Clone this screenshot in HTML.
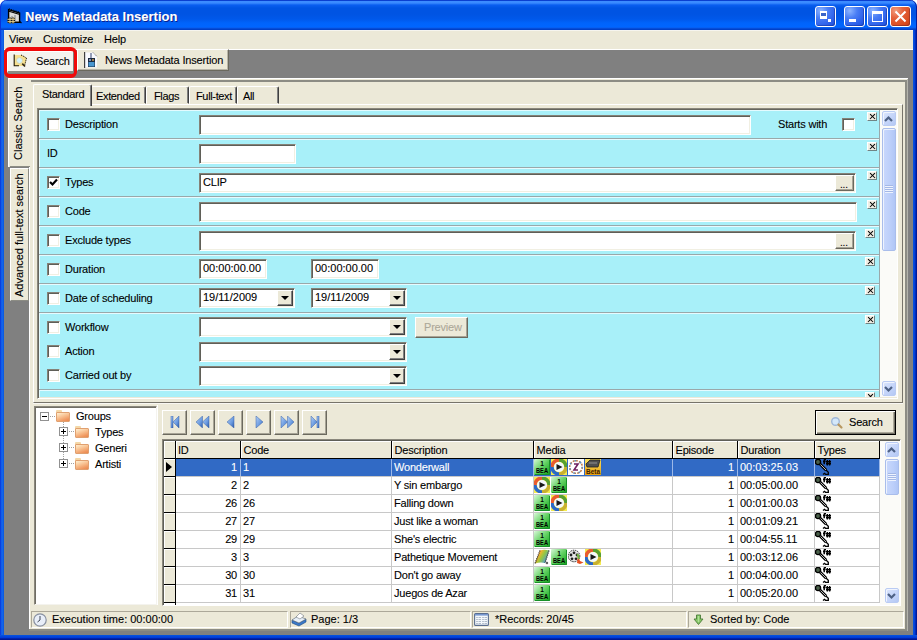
<!DOCTYPE html>
<html><head><meta charset="utf-8"><style>
*{box-sizing:border-box;margin:0;padding:0}
html,body{width:917px;height:640px;overflow:hidden;background:#fff}
body{font-family:"Liberation Sans",sans-serif;font-size:11px;color:#000;position:relative}
.a{position:absolute}
.t{position:absolute;white-space:nowrap;line-height:13px;-webkit-text-stroke:0.1px currentColor;letter-spacing:-0.2px}
.n{letter-spacing:0}
#title{left:0;top:0;width:917px;height:30px;border-radius:7px 7px 0 0;box-shadow:inset 1px 0 #0831d9,inset -1px 0 #001ea0;
 background:linear-gradient(180deg,#0a3fd0 0,#0a3fd0 1px,#3d8cff 1px,#3a8aff 3px,#0a5ef0 5px,#0054e3 8px,#0054e3 14px,#0058ea 19px,#0064fb 23px,#0066ff 27px,#0a5ae8 28px,#0040c8 29px,#0040c8 30px)}
#frameL{left:0;top:30px;width:4px;height:610px;background:linear-gradient(90deg,#0831d9,#166aee 50%,#0855dd)}
#frameR{left:913px;top:30px;width:4px;height:610px;background:linear-gradient(90deg,#0855dd,#003bda 50%,#001ea0 75%,#00138c)}
#frameB{left:0;top:635px;width:917px;height:5px;background:linear-gradient(180deg,#0855dd,#003bda 50%,#001ea0 75%,#00138c)}
#client{left:4px;top:30px;width:909px;height:605px;background:#808080}
.beige{background:#ece9d8}
.cy{background:#a8f0f9}
.inp{position:absolute;background:#fff;border:1px solid;border-color:#858278 #fff #fff #858278;box-shadow:inset 1px 1px #5f5f58,inset -1px -1px #f1efe2}
.chk{position:absolute;width:13px;height:13px;background:#fff;border:1px solid;border-color:#858278 #fff #fff #858278;box-shadow:inset 1px 1px #5f5f58,inset -1px -1px #f1efe2}
.sep{position:absolute;left:39px;width:841px;height:2px;border-top:1px solid #9aa8aa;border-bottom:1px solid #e6fbff}
.xb{position:absolute;width:10px;height:9px;background:#f0eee4;border:1px solid;border-color:#fff #6f8484 #6f8484 #fff}
.xb:before,.xb:after{content:"";position:absolute;left:0.5px;top:3px;width:7px;height:1.2px;background:#000;transform:rotate(45deg)}
.xb:after{transform:rotate(-45deg)}
.btn{position:absolute;background:#ece9d8;border:1px solid;border-color:#fff #6b695e #6b695e #fff;box-shadow:inset -1px -1px #a7a496}
.dd{position:absolute;width:16px;height:16px;background:#ece9d8;border:1px solid;border-color:#fff #404040 #404040 #fff;box-shadow:inset -1px -1px #808080}
.dd:after{content:"";position:absolute;left:3px;top:5px;border-left:4px solid transparent;border-right:4px solid transparent;border-top:4px solid #000}
.tab{position:absolute;background:#ece9d8;border:1px solid;border-color:#fff #404040 transparent #fff;box-shadow:inset -1px 0 #808080;border-radius:2px 2px 0 0}
</style></head><body>
<div id="title" class="a"></div>
<div id="frameL" class="a"></div><div id="frameR" class="a"></div><div id="frameB" class="a"></div>
<div id="client" class="a"></div>
<div class="t n" style="left:25px;top:10px;font-size:13px;font-weight:bold;color:#fff;text-shadow:1px 1px #0a1e8c">News Metadata Insertion</div>
<div class="a beige" style="left:4px;top:30px;width:909px;height:19px;border-top:1px solid #f6f5ef"></div>
<div class="a" style="left:4px;top:49px;width:909px;height:1px;background:#fff"></div>
<div class="t" style="left:9px;top:33px">View</div>
<div class="t" style="left:43px;top:33px">Customize</div>
<div class="t" style="left:104px;top:33px">Help</div>
<div class="a" style="left:77px;top:49px;width:152px;height:22px;background:#ece9d8;border:1px solid;border-color:#fff #6b695e #6b695e #fff;box-shadow:inset -1px -1px #b8b5a8"></div>
<div class="t" style="left:105px;top:54px;letter-spacing:-0.15px">News Metadata Insertion</div>
<div class="a" style="left:7px;top:51px;width:66px;height:22px;background:#f4f3ee;border-top:1px solid #fff;border-left:1px solid #fff;border-bottom:2px solid #8c8c84"></div>
<div class="t" style="left:36px;top:55px">Search</div>
<div class="a" style="left:4px;top:47px;width:73px;height:31px;border:4px solid #f00a0a;border-left-width:3.5px;border-right-width:3.5px;border-radius:6px"></div>
<div class="a beige" style="left:29px;top:78px;width:878px;height:553px"></div>
<div class="a" style="left:8px;top:78px;width:900px;height:1px;background:#fff"></div>
<div class="a" style="left:29px;top:167px;width:1px;height:463px;background:#fff"></div>
<div class="a" style="left:31px;top:80px;width:876px;height:2px;background:#8c8c84"></div>
<div class="a" style="left:905px;top:80px;width:2px;height:551px;background:#8c8c84"></div>
<div class="a" style="left:907px;top:79px;width:1px;height:552px;background:#b4b4ac"></div>
<div class="a" style="left:29px;top:629px;width:878px;height:2px;background:#8c8c84"></div>
<div class="a beige" style="left:8px;top:78px;width:23px;height:89px;border-left:1px solid #fff;border-top:1px solid #fff"></div>
<div class="a" style="left:10px;top:166px;width:20px;height:1px;background:#8c8c84"></div>
<div class="t n" style="left:12px;top:160px;transform-origin:0 0;transform:rotate(-90deg)">Classic Search</div>
<div class="a beige" style="left:10px;top:168px;width:19px;height:133px;border:1px solid;border-color:#fff #8c8c84 #8c8c84 #fff;box-shadow:inset 0 0 0 0 #000"></div>
<div class="t n" style="left:13px;top:297px;transform-origin:0 0;transform:rotate(-90deg)">Advanced full-text search</div>
<div class="a beige" style="left:33px;top:104px;width:870px;height:299px;border:1px solid;border-color:#fff #77746a #77746a #fff"></div>
<div class="a" style="left:33px;top:403px;width:870px;height:1px;background:#f8f7f2"></div>
<div class="tab" style="left:91px;top:86px;width:55px;height:18px"></div>
<div class="t" style="left:96px;top:90px;letter-spacing:-0.35px">Extended</div>
<div class="tab" style="left:146px;top:86px;width:43px;height:18px"></div>
<div class="t" style="left:154px;top:90px;letter-spacing:-0.35px">Flags</div>
<div class="tab" style="left:189px;top:86px;width:48px;height:18px"></div>
<div class="t" style="left:196px;top:90px;letter-spacing:-0.35px">Full-text</div>
<div class="tab" style="left:237px;top:86px;width:42px;height:18px"></div>
<div class="t" style="left:243px;top:90px;letter-spacing:-0.35px">All</div>
<div class="tab" style="left:33px;top:84px;width:59px;height:22px;border-bottom:0"></div>
<div class="t" style="left:42px;top:88px;letter-spacing:-0.3px">Standard</div>
<div class="a" style="left:37px;top:108px;width:861px;height:291px;border:1px solid;border-color:#8a877c #fff #fff #8a877c;box-shadow:inset 1px 1px #66665e"></div>
<div class="a cy" style="left:39px;top:110px;width:841px;height:287px;border-top:1px solid #e4fbff;border-left:1px solid #e4fbff"></div>
<div class="a" style="left:880px;top:110px;width:17px;height:287px;background:#f8f8f3;border-left:1px solid #c8c8c0"></div>
<div class="sep" style="top:138px"></div>
<div class="sep" style="top:167px"></div>
<div class="sep" style="top:196px"></div>
<div class="sep" style="top:225px"></div>
<div class="sep" style="top:254px"></div>
<div class="sep" style="top:283px"></div>
<div class="sep" style="top:312px"></div>
<div class="sep" style="top:389px"></div>
<div class="chk" style="left:47px;top:118px"></div>
<div class="t" style="left:65px;top:118px">Description</div>
<div class="t" style="left:47px;top:147px">ID</div>
<div class="chk" style="left:47px;top:176px"></div>
<div class="t" style="left:65px;top:176px">Types</div>
<div class="chk" style="left:47px;top:205px"></div>
<div class="t" style="left:65px;top:205px">Code</div>
<div class="chk" style="left:47px;top:234px"></div>
<div class="t" style="left:65px;top:234px">Exclude types</div>
<div class="chk" style="left:47px;top:263px"></div>
<div class="t" style="left:65px;top:263px">Duration</div>
<div class="chk" style="left:47px;top:292px"></div>
<div class="t" style="left:65px;top:292px">Date of scheduling</div>
<div class="chk" style="left:47px;top:321px"></div>
<div class="t" style="left:65px;top:321px">Workflow</div>
<div class="chk" style="left:47px;top:345px"></div>
<div class="t" style="left:65px;top:345px">Action</div>
<div class="chk" style="left:47px;top:369px"></div>
<div class="t" style="left:65px;top:369px">Carried out by</div>
<div class="xb" style="left:867px;top:112px"></div>
<div class="xb" style="left:867px;top:142px"></div>
<div class="xb" style="left:867px;top:171px"></div>
<div class="xb" style="left:867px;top:200px"></div>
<div class="xb" style="left:865px;top:229px"></div>
<div class="xb" style="left:865px;top:257px"></div>
<div class="xb" style="left:865px;top:286px"></div>
<div class="xb" style="left:865px;top:315px"></div>
<div class="a" style="left:865px;top:392px;width:10px;height:5px;overflow:hidden"><div class="xb" style="left:0;top:0"></div></div>
<div class="inp" style="left:199px;top:115px;width:552px;height:20px"></div>
<div class="t" style="left:778px;top:117.5px">Starts with</div>
<div class="chk" style="left:842px;top:118px"></div>
<div class="inp" style="left:199px;top:144px;width:97px;height:20px"></div>
<div class="inp" style="left:199px;top:173px;width:657px;height:20px"></div>
<div class="t" style="left:203px;top:176px">CLIP</div>
<div class="btn" style="left:835px;top:175px;width:19px;height:16px"></div><div class="t" style="left:840px;top:178px;font-size:10px">...</div>
<div class="inp" style="left:199px;top:202px;width:658px;height:20px"></div>
<div class="inp" style="left:199px;top:231px;width:657px;height:20px"></div>
<div class="btn" style="left:835px;top:233px;width:19px;height:16px"></div><div class="t" style="left:840px;top:236px;font-size:10px">...</div>
<div class="inp" style="left:199px;top:259px;width:68px;height:20px"></div><div class="t n" style="left:203px;top:262px">00:00:00.00</div>
<div class="inp" style="left:311px;top:259px;width:68px;height:20px"></div><div class="t n" style="left:315px;top:262px">00:00:00.00</div>
<div class="inp" style="left:199px;top:288px;width:96px;height:20px"></div><div class="t n" style="left:203px;top:291px">19/11/2009</div><div class="dd" style="left:277px;top:290px"></div>
<div class="inp" style="left:311px;top:288px;width:96px;height:20px"></div><div class="t n" style="left:315px;top:291px">19/11/2009</div><div class="dd" style="left:389px;top:290px"></div>
<div class="inp" style="left:199px;top:317px;width:208px;height:20px"></div><div class="dd" style="left:389px;top:319px"></div>
<div class="inp" style="left:199px;top:342px;width:208px;height:20px"></div><div class="dd" style="left:389px;top:344px"></div>
<div class="inp" style="left:199px;top:366px;width:208px;height:20px"></div><div class="dd" style="left:389px;top:368px"></div>
<div class="btn" style="left:415px;top:317px;width:53px;height:21px"></div><div class="t" style="left:424px;top:321px;color:#aca899">Preview</div>
<div class="a beige" style="left:33px;top:404px;width:870px;height:203px"></div>
<div class="a" style="left:34px;top:406px;width:123px;height:199px;background:#fff;border:1px solid;border-color:#8a877c #f4f3ee #f4f3ee #8a877c;box-shadow:inset 1px 1px #6f6d64"></div>
<div class="a" style="left:157px;top:405px;width:1px;height:200px;background:#fff"></div>
<div class="a" style="left:40px;top:412px;width:9px;height:9px;border:1px solid #919191;background:#fff"></div><div class="a" style="left:42px;top:416px;width:5px;height:1px;background:#000"></div>
<div class="a" style="left:50px;top:416px;width:5px;border-top:1px dotted #a0a0a0"></div>
<div class="a" style="left:56px;top:410px;width:6px;height:3px;background:#f4d8a8;border-radius:1px 1px 0 0"></div><div class="a" style="left:56px;top:412px;width:14px;height:10px;background:linear-gradient(160deg,#fff0d0,#f8c090 45%,#f09860 80%,#e88850);border:1px solid #e0a070;border-radius:1px"></div>
<div class="t" style="left:76px;top:410px">Groups</div>
<div class="a" style="left:63px;top:422px;height:43px;border-left:1px dotted #a0a0a0"></div>
<div class="a" style="left:59px;top:427px;width:9px;height:9px;border:1px solid #919191;background:#fff"></div><div class="a" style="left:61px;top:431px;width:5px;height:1px;background:#000"></div><div class="a" style="left:63px;top:429px;width:1px;height:5px;background:#000"></div>
<div class="a" style="left:69px;top:431px;width:5px;border-top:1px dotted #a0a0a0"></div>
<div class="a" style="left:75px;top:426px;width:6px;height:3px;background:#f4d8a8;border-radius:1px 1px 0 0"></div><div class="a" style="left:75px;top:428px;width:14px;height:10px;background:linear-gradient(160deg,#fff0d0,#f8c090 45%,#f09860 80%,#e88850);border:1px solid #e0a070;border-radius:1px"></div>
<div class="t" style="left:95px;top:426px">Types</div>
<div class="a" style="left:59px;top:443px;width:9px;height:9px;border:1px solid #919191;background:#fff"></div><div class="a" style="left:61px;top:447px;width:5px;height:1px;background:#000"></div><div class="a" style="left:63px;top:445px;width:1px;height:5px;background:#000"></div>
<div class="a" style="left:69px;top:447px;width:5px;border-top:1px dotted #a0a0a0"></div>
<div class="a" style="left:75px;top:442px;width:6px;height:3px;background:#f4d8a8;border-radius:1px 1px 0 0"></div><div class="a" style="left:75px;top:444px;width:14px;height:10px;background:linear-gradient(160deg,#fff0d0,#f8c090 45%,#f09860 80%,#e88850);border:1px solid #e0a070;border-radius:1px"></div>
<div class="t" style="left:95px;top:442px">Generi</div>
<div class="a" style="left:59px;top:459px;width:9px;height:9px;border:1px solid #919191;background:#fff"></div><div class="a" style="left:61px;top:463px;width:5px;height:1px;background:#000"></div><div class="a" style="left:63px;top:461px;width:1px;height:5px;background:#000"></div>
<div class="a" style="left:69px;top:463px;width:5px;border-top:1px dotted #a0a0a0"></div>
<div class="a" style="left:75px;top:458px;width:6px;height:3px;background:#f4d8a8;border-radius:1px 1px 0 0"></div><div class="a" style="left:75px;top:460px;width:14px;height:10px;background:linear-gradient(160deg,#fff0d0,#f8c090 45%,#f09860 80%,#e88850);border:1px solid #e0a070;border-radius:1px"></div>
<div class="t" style="left:95px;top:458px">Artisti</div>
<div class="btn" style="left:162px;top:410px;width:25px;height:25px"></div>
<div class="btn" style="left:190px;top:410px;width:25px;height:25px"></div>
<div class="btn" style="left:218px;top:410px;width:25px;height:25px"></div>
<div class="btn" style="left:246px;top:410px;width:25px;height:25px"></div>
<div class="btn" style="left:274px;top:410px;width:25px;height:25px"></div>
<div class="btn" style="left:302px;top:410px;width:25px;height:25px"></div>
<svg class="a" style="left:170px;top:416px" width="15" height="12" viewBox="0 0 15 12"><defs><linearGradient id="g0" x1="0" y1="0" x2="1" y2="1"><stop offset="0" stop-color="#b4d0f4"/><stop offset="0.6" stop-color="#6a9ae0"/><stop offset="1" stop-color="#2a58a8"/></linearGradient></defs><g fill="url(#g0)" stroke="#3a62a8" stroke-width="0.5"><rect x="1" y="0" width="2" height="12"/><path d="M9 0 L3 6 L9 12 Z"/></g></svg>
<svg class="a" style="left:195px;top:416px" width="15" height="12" viewBox="0 0 15 12"><defs><linearGradient id="g1" x1="0" y1="0" x2="1" y2="1"><stop offset="0" stop-color="#b4d0f4"/><stop offset="0.6" stop-color="#6a9ae0"/><stop offset="1" stop-color="#2a58a8"/></linearGradient></defs><g fill="url(#g1)" stroke="#3a62a8" stroke-width="0.5"><path d="M7.5 0 L1 6 L7.5 12 Z"/><path d="M14 0 L7.5 6 L14 12 Z"/></g></svg>
<svg class="a" style="left:226px;top:416px" width="15" height="12" viewBox="0 0 15 12"><defs><linearGradient id="g2" x1="0" y1="0" x2="1" y2="1"><stop offset="0" stop-color="#b4d0f4"/><stop offset="0.6" stop-color="#6a9ae0"/><stop offset="1" stop-color="#2a58a8"/></linearGradient></defs><g fill="url(#g2)" stroke="#3a62a8" stroke-width="0.5"><path d="M8 0 L1 6 L8 12 Z"/></g></svg>
<svg class="a" style="left:255px;top:416px" width="15" height="12" viewBox="0 0 15 12"><defs><linearGradient id="g3" x1="0" y1="0" x2="1" y2="1"><stop offset="0" stop-color="#b4d0f4"/><stop offset="0.6" stop-color="#6a9ae0"/><stop offset="1" stop-color="#2a58a8"/></linearGradient></defs><g fill="url(#g3)" stroke="#3a62a8" stroke-width="0.5"><path d="M1 0 L8 6 L1 12 Z"/></g></svg>
<svg class="a" style="left:280px;top:416px" width="15" height="12" viewBox="0 0 15 12"><defs><linearGradient id="g4" x1="0" y1="0" x2="1" y2="1"><stop offset="0" stop-color="#b4d0f4"/><stop offset="0.6" stop-color="#6a9ae0"/><stop offset="1" stop-color="#2a58a8"/></linearGradient></defs><g fill="url(#g4)" stroke="#3a62a8" stroke-width="0.5"><path d="M1 0 L7.5 6 L1 12 Z"/><path d="M7.5 0 L14 6 L7.5 12 Z"/></g></svg>
<svg class="a" style="left:310px;top:416px" width="15" height="12" viewBox="0 0 15 12"><defs><linearGradient id="g5" x1="0" y1="0" x2="1" y2="1"><stop offset="0" stop-color="#b4d0f4"/><stop offset="0.6" stop-color="#6a9ae0"/><stop offset="1" stop-color="#2a58a8"/></linearGradient></defs><g fill="url(#g5)" stroke="#3a62a8" stroke-width="0.5"><path d="M1 0 L7 6 L1 12 Z"/><rect x="7" y="0" width="2" height="12"/></g></svg>
<div class="a" style="left:815px;top:410px;width:81px;height:25px;border:1px solid #000;background:#ece9d8;box-shadow:inset 1px 1px #fff,inset -1px -1px #716f64,inset -2px -2px #aca899"></div>
<div class="t" style="left:849px;top:416px">Search</div>
<svg class="a" style="left:829px;top:415px" width="16" height="16" viewBox="0 0 16 16"><circle cx="6.5" cy="6.5" r="3.8" fill="#d4e8fa" stroke="#a0b8d8" stroke-width="1.4"/><path d="M9.5 9.5 L12.5 12.5" stroke="#b89860" stroke-width="2.2" stroke-linecap="round"/></svg>
<div class="a" style="left:162px;top:439px;width:739px;height:167px;border:1px solid;border-color:#8a877c #fff #fff #8a877c;box-shadow:inset 1px 1px #5f5f58;background:#fff"></div>
<div class="a beige" style="left:164px;top:441px;width:716px;height:17px"></div>
<div class="a" style="left:164px;top:458px;width:716px;height:1px;background:#000"></div>
<div class="a" style="left:176px;top:441px;width:64px;height:17px;border-top:1px solid #fff;border-left:1px solid #fff"></div>
<div class="a" style="left:240px;top:441px;width:1px;height:17px;background:#000"></div>
<div class="a" style="left:241px;top:441px;width:150px;height:17px;border-top:1px solid #fff;border-left:1px solid #fff"></div>
<div class="a" style="left:391px;top:441px;width:1px;height:17px;background:#000"></div>
<div class="a" style="left:392px;top:441px;width:141px;height:17px;border-top:1px solid #fff;border-left:1px solid #fff"></div>
<div class="a" style="left:533px;top:441px;width:1px;height:17px;background:#000"></div>
<div class="a" style="left:534px;top:441px;width:138px;height:17px;border-top:1px solid #fff;border-left:1px solid #fff"></div>
<div class="a" style="left:672px;top:441px;width:1px;height:17px;background:#000"></div>
<div class="a" style="left:673px;top:441px;width:64px;height:17px;border-top:1px solid #fff;border-left:1px solid #fff"></div>
<div class="a" style="left:737px;top:441px;width:1px;height:17px;background:#000"></div>
<div class="a" style="left:738px;top:441px;width:76px;height:17px;border-top:1px solid #fff;border-left:1px solid #fff"></div>
<div class="a" style="left:814px;top:441px;width:1px;height:17px;background:#000"></div>
<div class="a" style="left:815px;top:441px;width:64px;height:17px;border-top:1px solid #fff;border-left:1px solid #fff"></div>
<div class="a" style="left:879px;top:441px;width:1px;height:17px;background:#000"></div>
<div class="t" style="left:178px;top:443.5px">ID</div>
<div class="t" style="left:243.5px;top:443.5px">Code</div>
<div class="t" style="left:394.5px;top:443.5px">Description</div>
<div class="t" style="left:536.5px;top:443.5px">Media</div>
<div class="t" style="left:675.5px;top:443.5px">Episode</div>
<div class="t" style="left:740.5px;top:443.5px">Duration</div>
<div class="t" style="left:817.5px;top:443.5px">Types</div>
<div class="a" style="left:164px;top:441px;width:11px;height:17px;border-top:1px solid #fff;border-left:1px solid #fff"></div>
<div class="a" style="left:175px;top:441px;width:1px;height:164px;background:#000"></div>
<div class="a" style="left:176px;top:459px;width:703px;height:17px;background:#316ac5"></div>
<div class="a" style="left:176px;top:476px;width:703px;height:1px;background:#c8c8c8"></div>
<div class="a beige" style="left:164px;top:459px;width:11px;height:17px;border-top:1px solid #fff;border-left:1px solid #fff"></div>
<div class="a" style="left:164px;top:476px;width:11px;height:1px;background:#000"></div>
<div class="t" style="left:176px;top:461px;width:61px;text-align:right;color:#fff">1</div>
<div class="t" style="left:243px;top:461px;color:#fff">1</div>
<div class="t" style="left:394px;top:461px;color:#fff">Wonderwall</div>
<div class="t" style="left:672px;top:461px;width:62px;text-align:right;color:#fff">1</div>
<div class="t n" style="left:740px;top:461px;color:#fff">00:03:25.03</div>
<svg class="a" style="left:534px;top:459px" width="16" height="16" viewBox="0 0 16 16"><defs><linearGradient id="bg534459" x1="0" y1="0" x2="1" y2="1"><stop offset="0" stop-color="#d8f8d8"/><stop offset="0.5" stop-color="#60d060"/><stop offset="1" stop-color="#10a018"/></linearGradient></defs><rect width="16" height="16" rx="1" fill="url(#bg534459)"/><path d="M15.5 1 V15.5 H1" fill="none" stroke="#189028" stroke-width="1"/><text x="8" y="7" text-anchor="middle" font-family="Liberation Sans" font-weight="bold" font-size="6.5" fill="#000">1</text><text x="2" y="14" textLength="12" lengthAdjust="spacingAndGlyphs" font-family="Liberation Sans" font-weight="bold" font-size="7" fill="#000">BEA</text></svg>
<svg class="a" style="left:551px;top:459px" width="16" height="16" viewBox="0 0 16 16"><rect width="16" height="16" fill="#f4ec50"/><path d="M8 1 A7 7 0 0 0 1 8" fill="none" stroke="#e85a30" stroke-width="3.4"/><path d="M8 1 A7 7 0 0 1 15 8" fill="none" stroke="#58a030" stroke-width="3.4"/><path d="M15 8 A7 7 0 0 1 8 15" fill="none" stroke="#c8b030" stroke-width="3.4"/><path d="M8 15 A7 7 0 0 1 1 8" fill="none" stroke="#2a68c8" stroke-width="3.4"/><circle cx="8" cy="8" r="5" fill="#f4f8fc"/><path d="M5.5 5 L11.5 8 L5.5 11Z" fill="#181818"/></svg>
<svg class="a" style="left:568px;top:459px" width="16" height="16" viewBox="0 0 16 16"><rect width="16" height="16" fill="#fff"/><circle cx="8" cy="8" r="6.3" fill="none" stroke="#c08050" stroke-width="1.6" stroke-dasharray="2 1.2"/><circle cx="8" cy="8" r="6.3" fill="none" stroke="#6090c0" stroke-width="1.6" stroke-dasharray="1.5 4" /><path d="M6 5 H10 L6 11 H10" fill="none" stroke="#702060" stroke-width="1.6"/></svg>
<svg class="a" style="left:585px;top:459px" width="16" height="16" viewBox="0 0 16 16"><defs><linearGradient id="bt585459" x1="0" y1="0" x2="0" y2="1"><stop offset="0" stop-color="#f8e060"/><stop offset="1" stop-color="#e8a010"/></linearGradient></defs><rect width="16" height="16" fill="url(#bt585459)"/><path d="M1 5 L5 1 H15 L13 8 H2Z" fill="#505050" stroke="#202020" stroke-width="0.8"/><path d="M4 4 H12" stroke="#909090" stroke-width="1"/><text x="1" y="15" textLength="14" lengthAdjust="spacingAndGlyphs" font-family="Liberation Sans" font-weight="bold" font-size="6.5" fill="#402000">Beta</text></svg>
<svg class="a" style="left:815px;top:459px" width="17" height="17" viewBox="0 0 17 17"><path d="M5 5 L11.2 11.2" stroke="#000" stroke-width="2.8"/><path d="M5.3 5.3 L11 11" stroke="#b8b8b8" stroke-width="1"/><circle cx="3" cy="3" r="2.6" fill="#4a604a" stroke="#000" stroke-width="1.4"/><path d="M11 11 L13.3 13.3 L13.3 15.3 L10.5 15.3 L9.5 14.3 L8 15.5" fill="none" stroke="#000" stroke-width="1.3"/><path d="M9.2 5.2 V1.5 Q9.2 0.5 11 0.6 M8 2.4 H10.6" fill="none" stroke="#000" stroke-width="1.5"/><path d="M12.3 1 V6.5 M14.6 1 V6.5 M11 2.8 H16 M11 4.8 H16" fill="none" stroke="#000" stroke-width="1.4"/></svg>
<div class="a" style="left:176px;top:494px;width:703px;height:1px;background:#c8c8c8"></div>
<div class="a beige" style="left:164px;top:477px;width:11px;height:17px;border-top:1px solid #fff;border-left:1px solid #fff"></div>
<div class="a" style="left:164px;top:494px;width:11px;height:1px;background:#000"></div>
<div class="t" style="left:176px;top:479px;width:61px;text-align:right;color:#000">2</div>
<div class="t" style="left:243px;top:479px;color:#000">2</div>
<div class="t" style="left:394px;top:479px;color:#000">Y sin embargo</div>
<div class="t" style="left:672px;top:479px;width:62px;text-align:right;color:#000">1</div>
<div class="t n" style="left:740px;top:479px;color:#000">00:05:00.00</div>
<svg class="a" style="left:534px;top:477px" width="16" height="16" viewBox="0 0 16 16"><rect width="16" height="16" fill="#f4ec50"/><path d="M8 1 A7 7 0 0 0 1 8" fill="none" stroke="#e85a30" stroke-width="3.4"/><path d="M8 1 A7 7 0 0 1 15 8" fill="none" stroke="#58a030" stroke-width="3.4"/><path d="M15 8 A7 7 0 0 1 8 15" fill="none" stroke="#c8b030" stroke-width="3.4"/><path d="M8 15 A7 7 0 0 1 1 8" fill="none" stroke="#2a68c8" stroke-width="3.4"/><circle cx="8" cy="8" r="5" fill="#f4f8fc"/><path d="M5.5 5 L11.5 8 L5.5 11Z" fill="#181818"/></svg>
<svg class="a" style="left:551px;top:477px" width="16" height="16" viewBox="0 0 16 16"><defs><linearGradient id="bg551477" x1="0" y1="0" x2="1" y2="1"><stop offset="0" stop-color="#d8f8d8"/><stop offset="0.5" stop-color="#60d060"/><stop offset="1" stop-color="#10a018"/></linearGradient></defs><rect width="16" height="16" rx="1" fill="url(#bg551477)"/><path d="M15.5 1 V15.5 H1" fill="none" stroke="#189028" stroke-width="1"/><text x="8" y="7" text-anchor="middle" font-family="Liberation Sans" font-weight="bold" font-size="6.5" fill="#000">1</text><text x="2" y="14" textLength="12" lengthAdjust="spacingAndGlyphs" font-family="Liberation Sans" font-weight="bold" font-size="7" fill="#000">BEA</text></svg>
<svg class="a" style="left:815px;top:477px" width="17" height="17" viewBox="0 0 17 17"><path d="M5 5 L11.2 11.2" stroke="#000" stroke-width="2.8"/><path d="M5.3 5.3 L11 11" stroke="#b8b8b8" stroke-width="1"/><circle cx="3" cy="3" r="2.6" fill="#4a604a" stroke="#000" stroke-width="1.4"/><path d="M11 11 L13.3 13.3 L13.3 15.3 L10.5 15.3 L9.5 14.3 L8 15.5" fill="none" stroke="#000" stroke-width="1.3"/><path d="M9.2 5.2 V1.5 Q9.2 0.5 11 0.6 M8 2.4 H10.6" fill="none" stroke="#000" stroke-width="1.5"/><path d="M12.3 1 V6.5 M14.6 1 V6.5 M11 2.8 H16 M11 4.8 H16" fill="none" stroke="#000" stroke-width="1.4"/></svg>
<div class="a" style="left:176px;top:512px;width:703px;height:1px;background:#c8c8c8"></div>
<div class="a beige" style="left:164px;top:495px;width:11px;height:17px;border-top:1px solid #fff;border-left:1px solid #fff"></div>
<div class="a" style="left:164px;top:512px;width:11px;height:1px;background:#000"></div>
<div class="t" style="left:176px;top:497px;width:61px;text-align:right;color:#000">26</div>
<div class="t" style="left:243px;top:497px;color:#000">26</div>
<div class="t" style="left:394px;top:497px;color:#000">Falling down</div>
<div class="t" style="left:672px;top:497px;width:62px;text-align:right;color:#000">1</div>
<div class="t n" style="left:740px;top:497px;color:#000">00:01:00.03</div>
<svg class="a" style="left:534px;top:495px" width="16" height="16" viewBox="0 0 16 16"><defs><linearGradient id="bg534495" x1="0" y1="0" x2="1" y2="1"><stop offset="0" stop-color="#d8f8d8"/><stop offset="0.5" stop-color="#60d060"/><stop offset="1" stop-color="#10a018"/></linearGradient></defs><rect width="16" height="16" rx="1" fill="url(#bg534495)"/><path d="M15.5 1 V15.5 H1" fill="none" stroke="#189028" stroke-width="1"/><text x="8" y="7" text-anchor="middle" font-family="Liberation Sans" font-weight="bold" font-size="6.5" fill="#000">1</text><text x="2" y="14" textLength="12" lengthAdjust="spacingAndGlyphs" font-family="Liberation Sans" font-weight="bold" font-size="7" fill="#000">BEA</text></svg>
<svg class="a" style="left:551px;top:495px" width="16" height="16" viewBox="0 0 16 16"><rect width="16" height="16" fill="#f4ec50"/><path d="M8 1 A7 7 0 0 0 1 8" fill="none" stroke="#e85a30" stroke-width="3.4"/><path d="M8 1 A7 7 0 0 1 15 8" fill="none" stroke="#58a030" stroke-width="3.4"/><path d="M15 8 A7 7 0 0 1 8 15" fill="none" stroke="#c8b030" stroke-width="3.4"/><path d="M8 15 A7 7 0 0 1 1 8" fill="none" stroke="#2a68c8" stroke-width="3.4"/><circle cx="8" cy="8" r="5" fill="#f4f8fc"/><path d="M5.5 5 L11.5 8 L5.5 11Z" fill="#181818"/></svg>
<svg class="a" style="left:815px;top:495px" width="17" height="17" viewBox="0 0 17 17"><path d="M5 5 L11.2 11.2" stroke="#000" stroke-width="2.8"/><path d="M5.3 5.3 L11 11" stroke="#b8b8b8" stroke-width="1"/><circle cx="3" cy="3" r="2.6" fill="#4a604a" stroke="#000" stroke-width="1.4"/><path d="M11 11 L13.3 13.3 L13.3 15.3 L10.5 15.3 L9.5 14.3 L8 15.5" fill="none" stroke="#000" stroke-width="1.3"/><path d="M9.2 5.2 V1.5 Q9.2 0.5 11 0.6 M8 2.4 H10.6" fill="none" stroke="#000" stroke-width="1.5"/><path d="M12.3 1 V6.5 M14.6 1 V6.5 M11 2.8 H16 M11 4.8 H16" fill="none" stroke="#000" stroke-width="1.4"/></svg>
<div class="a" style="left:176px;top:530px;width:703px;height:1px;background:#c8c8c8"></div>
<div class="a beige" style="left:164px;top:513px;width:11px;height:17px;border-top:1px solid #fff;border-left:1px solid #fff"></div>
<div class="a" style="left:164px;top:530px;width:11px;height:1px;background:#000"></div>
<div class="t" style="left:176px;top:515px;width:61px;text-align:right;color:#000">27</div>
<div class="t" style="left:243px;top:515px;color:#000">27</div>
<div class="t" style="left:394px;top:515px;color:#000">Just like a woman</div>
<div class="t" style="left:672px;top:515px;width:62px;text-align:right;color:#000">1</div>
<div class="t n" style="left:740px;top:515px;color:#000">00:01:09.21</div>
<svg class="a" style="left:534px;top:513px" width="16" height="16" viewBox="0 0 16 16"><defs><linearGradient id="bg534513" x1="0" y1="0" x2="1" y2="1"><stop offset="0" stop-color="#d8f8d8"/><stop offset="0.5" stop-color="#60d060"/><stop offset="1" stop-color="#10a018"/></linearGradient></defs><rect width="16" height="16" rx="1" fill="url(#bg534513)"/><path d="M15.5 1 V15.5 H1" fill="none" stroke="#189028" stroke-width="1"/><text x="8" y="7" text-anchor="middle" font-family="Liberation Sans" font-weight="bold" font-size="6.5" fill="#000">1</text><text x="2" y="14" textLength="12" lengthAdjust="spacingAndGlyphs" font-family="Liberation Sans" font-weight="bold" font-size="7" fill="#000">BEA</text></svg>
<svg class="a" style="left:815px;top:513px" width="17" height="17" viewBox="0 0 17 17"><path d="M5 5 L11.2 11.2" stroke="#000" stroke-width="2.8"/><path d="M5.3 5.3 L11 11" stroke="#b8b8b8" stroke-width="1"/><circle cx="3" cy="3" r="2.6" fill="#4a604a" stroke="#000" stroke-width="1.4"/><path d="M11 11 L13.3 13.3 L13.3 15.3 L10.5 15.3 L9.5 14.3 L8 15.5" fill="none" stroke="#000" stroke-width="1.3"/><path d="M9.2 5.2 V1.5 Q9.2 0.5 11 0.6 M8 2.4 H10.6" fill="none" stroke="#000" stroke-width="1.5"/><path d="M12.3 1 V6.5 M14.6 1 V6.5 M11 2.8 H16 M11 4.8 H16" fill="none" stroke="#000" stroke-width="1.4"/></svg>
<div class="a" style="left:176px;top:548px;width:703px;height:1px;background:#c8c8c8"></div>
<div class="a beige" style="left:164px;top:531px;width:11px;height:17px;border-top:1px solid #fff;border-left:1px solid #fff"></div>
<div class="a" style="left:164px;top:548px;width:11px;height:1px;background:#000"></div>
<div class="t" style="left:176px;top:533px;width:61px;text-align:right;color:#000">29</div>
<div class="t" style="left:243px;top:533px;color:#000">29</div>
<div class="t" style="left:394px;top:533px;color:#000">She's electric</div>
<div class="t" style="left:672px;top:533px;width:62px;text-align:right;color:#000">1</div>
<div class="t n" style="left:740px;top:533px;color:#000">00:04:55.11</div>
<svg class="a" style="left:534px;top:531px" width="16" height="16" viewBox="0 0 16 16"><defs><linearGradient id="bg534531" x1="0" y1="0" x2="1" y2="1"><stop offset="0" stop-color="#d8f8d8"/><stop offset="0.5" stop-color="#60d060"/><stop offset="1" stop-color="#10a018"/></linearGradient></defs><rect width="16" height="16" rx="1" fill="url(#bg534531)"/><path d="M15.5 1 V15.5 H1" fill="none" stroke="#189028" stroke-width="1"/><text x="8" y="7" text-anchor="middle" font-family="Liberation Sans" font-weight="bold" font-size="6.5" fill="#000">1</text><text x="2" y="14" textLength="12" lengthAdjust="spacingAndGlyphs" font-family="Liberation Sans" font-weight="bold" font-size="7" fill="#000">BEA</text></svg>
<svg class="a" style="left:815px;top:531px" width="17" height="17" viewBox="0 0 17 17"><path d="M5 5 L11.2 11.2" stroke="#000" stroke-width="2.8"/><path d="M5.3 5.3 L11 11" stroke="#b8b8b8" stroke-width="1"/><circle cx="3" cy="3" r="2.6" fill="#4a604a" stroke="#000" stroke-width="1.4"/><path d="M11 11 L13.3 13.3 L13.3 15.3 L10.5 15.3 L9.5 14.3 L8 15.5" fill="none" stroke="#000" stroke-width="1.3"/><path d="M9.2 5.2 V1.5 Q9.2 0.5 11 0.6 M8 2.4 H10.6" fill="none" stroke="#000" stroke-width="1.5"/><path d="M12.3 1 V6.5 M14.6 1 V6.5 M11 2.8 H16 M11 4.8 H16" fill="none" stroke="#000" stroke-width="1.4"/></svg>
<div class="a" style="left:176px;top:566px;width:703px;height:1px;background:#c8c8c8"></div>
<div class="a beige" style="left:164px;top:549px;width:11px;height:17px;border-top:1px solid #fff;border-left:1px solid #fff"></div>
<div class="a" style="left:164px;top:566px;width:11px;height:1px;background:#000"></div>
<div class="t" style="left:176px;top:551px;width:61px;text-align:right;color:#000">3</div>
<div class="t" style="left:243px;top:551px;color:#000">3</div>
<div class="t" style="left:394px;top:551px;color:#000">Pathetique Movement</div>
<div class="t" style="left:672px;top:551px;width:62px;text-align:right;color:#000">1</div>
<div class="t n" style="left:740px;top:551px;color:#000">00:03:12.06</div>
<svg class="a" style="left:534px;top:549px" width="16" height="16" viewBox="0 0 16 16"><defs><linearGradient id="ms534549" x1="0" y1="0" x2="1" y2="0.6"><stop offset="0" stop-color="#f06020"/><stop offset="0.35" stop-color="#f8b030"/><stop offset="0.6" stop-color="#98c840"/><stop offset="1" stop-color="#4898e0"/></linearGradient></defs><path d="M6 1.5 Q10 0 15 1.5 L11 14 Q6 13 1 14.5Z" fill="url(#ms534549)"/><path d="M6 1.5 L1 14.5 M15 1.5 L11 14" stroke="#202020" stroke-width="1.2" stroke-dasharray="1.2 0.9"/><circle cx="13" cy="14" r="1.2" fill="#606060"/></svg>
<svg class="a" style="left:551px;top:549px" width="16" height="16" viewBox="0 0 16 16"><defs><linearGradient id="bg551549" x1="0" y1="0" x2="1" y2="1"><stop offset="0" stop-color="#d8f8d8"/><stop offset="0.5" stop-color="#60d060"/><stop offset="1" stop-color="#10a018"/></linearGradient></defs><rect width="16" height="16" rx="1" fill="url(#bg551549)"/><path d="M15.5 1 V15.5 H1" fill="none" stroke="#189028" stroke-width="1"/><text x="8" y="7" text-anchor="middle" font-family="Liberation Sans" font-weight="bold" font-size="6.5" fill="#000">1</text><text x="2" y="14" textLength="12" lengthAdjust="spacingAndGlyphs" font-family="Liberation Sans" font-weight="bold" font-size="7" fill="#000">BEA</text></svg>
<svg class="a" style="left:568px;top:549px" width="16" height="16" viewBox="0 0 16 16"><circle cx="6" cy="7" r="5.8" fill="#e8e8e8" stroke="#303030" stroke-width="1" stroke-dasharray="1.5 0.8"/><circle cx="6" cy="3.8" r="1.4" fill="#202020"/><circle cx="3" cy="6" r="1.4" fill="#202020"/><circle cx="9" cy="6" r="1.4" fill="#202020"/><circle cx="4" cy="9.8" r="1.4" fill="#202020"/><circle cx="8" cy="9.8" r="1.4" fill="#202020"/><path d="M10 7 L12 12 L15.5 13.5 L12 15 L9 14Z" fill="#e85020"/><path d="M9.5 5 L11 10" stroke="#70b040" stroke-width="2"/></svg>
<svg class="a" style="left:585px;top:549px" width="16" height="16" viewBox="0 0 16 16"><rect width="16" height="16" fill="#f4ec50"/><path d="M8 1 A7 7 0 0 0 1 8" fill="none" stroke="#e85a30" stroke-width="3.4"/><path d="M8 1 A7 7 0 0 1 15 8" fill="none" stroke="#58a030" stroke-width="3.4"/><path d="M15 8 A7 7 0 0 1 8 15" fill="none" stroke="#c8b030" stroke-width="3.4"/><path d="M8 15 A7 7 0 0 1 1 8" fill="none" stroke="#2a68c8" stroke-width="3.4"/><circle cx="8" cy="8" r="5" fill="#f4f8fc"/><path d="M5.5 5 L11.5 8 L5.5 11Z" fill="#181818"/></svg>
<svg class="a" style="left:815px;top:549px" width="17" height="17" viewBox="0 0 17 17"><path d="M5 5 L11.2 11.2" stroke="#000" stroke-width="2.8"/><path d="M5.3 5.3 L11 11" stroke="#b8b8b8" stroke-width="1"/><circle cx="3" cy="3" r="2.6" fill="#4a604a" stroke="#000" stroke-width="1.4"/><path d="M11 11 L13.3 13.3 L13.3 15.3 L10.5 15.3 L9.5 14.3 L8 15.5" fill="none" stroke="#000" stroke-width="1.3"/><path d="M9.2 5.2 V1.5 Q9.2 0.5 11 0.6 M8 2.4 H10.6" fill="none" stroke="#000" stroke-width="1.5"/><path d="M12.3 1 V6.5 M14.6 1 V6.5 M11 2.8 H16 M11 4.8 H16" fill="none" stroke="#000" stroke-width="1.4"/></svg>
<div class="a" style="left:176px;top:584px;width:703px;height:1px;background:#c8c8c8"></div>
<div class="a beige" style="left:164px;top:567px;width:11px;height:17px;border-top:1px solid #fff;border-left:1px solid #fff"></div>
<div class="a" style="left:164px;top:584px;width:11px;height:1px;background:#000"></div>
<div class="t" style="left:176px;top:569px;width:61px;text-align:right;color:#000">30</div>
<div class="t" style="left:243px;top:569px;color:#000">30</div>
<div class="t" style="left:394px;top:569px;color:#000">Don't go away</div>
<div class="t" style="left:672px;top:569px;width:62px;text-align:right;color:#000">1</div>
<div class="t n" style="left:740px;top:569px;color:#000">00:04:00.00</div>
<svg class="a" style="left:534px;top:567px" width="16" height="16" viewBox="0 0 16 16"><defs><linearGradient id="bg534567" x1="0" y1="0" x2="1" y2="1"><stop offset="0" stop-color="#d8f8d8"/><stop offset="0.5" stop-color="#60d060"/><stop offset="1" stop-color="#10a018"/></linearGradient></defs><rect width="16" height="16" rx="1" fill="url(#bg534567)"/><path d="M15.5 1 V15.5 H1" fill="none" stroke="#189028" stroke-width="1"/><text x="8" y="7" text-anchor="middle" font-family="Liberation Sans" font-weight="bold" font-size="6.5" fill="#000">1</text><text x="2" y="14" textLength="12" lengthAdjust="spacingAndGlyphs" font-family="Liberation Sans" font-weight="bold" font-size="7" fill="#000">BEA</text></svg>
<svg class="a" style="left:815px;top:567px" width="17" height="17" viewBox="0 0 17 17"><path d="M5 5 L11.2 11.2" stroke="#000" stroke-width="2.8"/><path d="M5.3 5.3 L11 11" stroke="#b8b8b8" stroke-width="1"/><circle cx="3" cy="3" r="2.6" fill="#4a604a" stroke="#000" stroke-width="1.4"/><path d="M11 11 L13.3 13.3 L13.3 15.3 L10.5 15.3 L9.5 14.3 L8 15.5" fill="none" stroke="#000" stroke-width="1.3"/><path d="M9.2 5.2 V1.5 Q9.2 0.5 11 0.6 M8 2.4 H10.6" fill="none" stroke="#000" stroke-width="1.5"/><path d="M12.3 1 V6.5 M14.6 1 V6.5 M11 2.8 H16 M11 4.8 H16" fill="none" stroke="#000" stroke-width="1.4"/></svg>
<div class="a" style="left:176px;top:602px;width:703px;height:1px;background:#c8c8c8"></div>
<div class="a beige" style="left:164px;top:585px;width:11px;height:17px;border-top:1px solid #fff;border-left:1px solid #fff"></div>
<div class="a" style="left:164px;top:602px;width:11px;height:1px;background:#000"></div>
<div class="t" style="left:176px;top:587px;width:61px;text-align:right;color:#000">31</div>
<div class="t" style="left:243px;top:587px;color:#000">31</div>
<div class="t" style="left:394px;top:587px;color:#000">Juegos de Azar</div>
<div class="t" style="left:672px;top:587px;width:62px;text-align:right;color:#000">1</div>
<div class="t n" style="left:740px;top:587px;color:#000">00:05:20.00</div>
<svg class="a" style="left:534px;top:585px" width="16" height="16" viewBox="0 0 16 16"><defs><linearGradient id="bg534585" x1="0" y1="0" x2="1" y2="1"><stop offset="0" stop-color="#d8f8d8"/><stop offset="0.5" stop-color="#60d060"/><stop offset="1" stop-color="#10a018"/></linearGradient></defs><rect width="16" height="16" rx="1" fill="url(#bg534585)"/><path d="M15.5 1 V15.5 H1" fill="none" stroke="#189028" stroke-width="1"/><text x="8" y="7" text-anchor="middle" font-family="Liberation Sans" font-weight="bold" font-size="6.5" fill="#000">1</text><text x="2" y="14" textLength="12" lengthAdjust="spacingAndGlyphs" font-family="Liberation Sans" font-weight="bold" font-size="7" fill="#000">BEA</text></svg>
<svg class="a" style="left:815px;top:585px" width="17" height="17" viewBox="0 0 17 17"><path d="M5 5 L11.2 11.2" stroke="#000" stroke-width="2.8"/><path d="M5.3 5.3 L11 11" stroke="#b8b8b8" stroke-width="1"/><circle cx="3" cy="3" r="2.6" fill="#4a604a" stroke="#000" stroke-width="1.4"/><path d="M11 11 L13.3 13.3 L13.3 15.3 L10.5 15.3 L9.5 14.3 L8 15.5" fill="none" stroke="#000" stroke-width="1.3"/><path d="M9.2 5.2 V1.5 Q9.2 0.5 11 0.6 M8 2.4 H10.6" fill="none" stroke="#000" stroke-width="1.5"/><path d="M12.3 1 V6.5 M14.6 1 V6.5 M11 2.8 H16 M11 4.8 H16" fill="none" stroke="#000" stroke-width="1.4"/></svg>
<div class="a" style="left:166px;top:462px;width:0;height:0;border-top:5.5px solid transparent;border-bottom:5.5px solid transparent;border-left:6px solid #000"></div>
<div class="a" style="left:240px;top:459px;width:1px;height:17px;background:#9cb8e8"></div>
<div class="a" style="left:240px;top:476px;width:1px;height:127px;background:#c8c8c8"></div>
<div class="a" style="left:391px;top:459px;width:1px;height:17px;background:#9cb8e8"></div>
<div class="a" style="left:391px;top:476px;width:1px;height:127px;background:#c8c8c8"></div>
<div class="a" style="left:533px;top:459px;width:1px;height:17px;background:#9cb8e8"></div>
<div class="a" style="left:533px;top:476px;width:1px;height:127px;background:#c8c8c8"></div>
<div class="a" style="left:672px;top:459px;width:1px;height:17px;background:#9cb8e8"></div>
<div class="a" style="left:672px;top:476px;width:1px;height:127px;background:#c8c8c8"></div>
<div class="a" style="left:737px;top:459px;width:1px;height:17px;background:#9cb8e8"></div>
<div class="a" style="left:737px;top:476px;width:1px;height:127px;background:#c8c8c8"></div>
<div class="a" style="left:814px;top:459px;width:1px;height:17px;background:#9cb8e8"></div>
<div class="a" style="left:814px;top:476px;width:1px;height:127px;background:#c8c8c8"></div>
<div class="a" style="left:879px;top:459px;width:1px;height:17px;background:#9cb8e8"></div>
<div class="a" style="left:879px;top:476px;width:1px;height:127px;background:#c8c8c8"></div>
<div class="a" style="left:31px;top:611px;width:257px;height:17px;border:1px solid;border-color:#aca899 #fff #fff #aca899"></div>
<div class="a" style="left:290px;top:611px;width:181px;height:17px;border:1px solid;border-color:#aca899 #fff #fff #aca899"></div>
<div class="a" style="left:472px;top:611px;width:215px;height:17px;border:1px solid;border-color:#aca899 #fff #fff #aca899"></div>
<div class="a" style="left:688px;top:611px;width:216px;height:17px;border:1px solid;border-color:#aca899 #fff #fff #aca899"></div>
<div class="t n" style="left:52px;top:613px">Execution time: 00:00:00</div>
<div class="t n" style="left:311px;top:613px">Page: 1/3</div>
<div class="t n" style="left:495px;top:613px">*Records: 20/45</div>
<div class="t n" style="left:710px;top:613px">Sorted by: Code</div>
<svg class="a" style="left:33px;top:613px" width="14" height="14" viewBox="0 0 14 14"><circle cx="7" cy="7" r="6.2" fill="#e8eef8" stroke="#8890a0" stroke-width="1.2"/><path d="M7 3 V7 L4.5 9" stroke="#404858" stroke-width="1" fill="none"/></svg>
<svg class="a" style="left:291px;top:612px" width="16" height="16" viewBox="0 0 16 16"><path d="M1 8 L8 11 L15 7 L15 10 L8 14 L1 11Z" fill="#3a78c8" stroke="#204a80" stroke-width="0.6"/><path d="M1 8 L7 4 L15 7 L8 11Z" fill="#e8f0f8" stroke="#506070" stroke-width="0.6"/><path d="M5 5 L9 1 L13 4 L9 7Z" fill="#fff" stroke="#707880" stroke-width="0.6"/></svg>
<svg class="a" style="left:474px;top:613px" width="15" height="13" viewBox="0 0 15 13"><rect x="0.6" y="0.6" width="13.8" height="11.8" rx="1" fill="#f4f8fc" stroke="#5a6e90" stroke-width="1.1"/><rect x="1" y="1" width="13" height="1.6" fill="#7898d0"/><g fill="#8090a8"><rect x="2.5" y="4" width="1" height="1"/><rect x="2.5" y="6" width="1" height="1"/><rect x="2.5" y="8" width="1" height="1"/><rect x="2.5" y="10" width="1" height="1"/><rect x="8.5" y="4" width="1" height="1"/><rect x="8.5" y="6" width="1" height="1"/><rect x="8.5" y="8" width="1" height="1"/><rect x="8.5" y="10" width="1" height="1"/></g><g fill="#b0bccc"><rect x="4.5" y="4" width="2.5" height="1"/><rect x="4.5" y="6" width="2.5" height="1"/><rect x="4.5" y="8" width="2.5" height="1"/><rect x="4.5" y="10" width="2.5" height="1"/><rect x="10.5" y="4" width="2.5" height="1"/><rect x="10.5" y="6" width="2.5" height="1"/><rect x="10.5" y="8" width="2.5" height="1"/><rect x="10.5" y="10" width="2.5" height="1"/></g></svg>
<svg class="a" style="left:693px;top:614px" width="11" height="12" viewBox="0 0 11 12"><path d="M3.5 1 H7.5 V5 H10 L5.5 10.5 L1 5 H3.5Z" fill="#88c868" stroke="#4a7a38" stroke-width="0.9"/><path d="M5.5 2 V8" stroke="#b0e098" stroke-width="1.2"/></svg>
<div class="a" style="left:815px;top:6px;width:21px;height:21px;border:1px solid #fff;border-radius:3px;background:radial-gradient(circle at 25% 20%,#8cb4ff 0,#4a7ef5 35%,#2a5de8 75%,#1c4fd6 100%);box-shadow:inset -1px -1px rgba(0,0,60,.25)"><div class="a" style="left:4px;top:4px;width:7px;height:8px;border:1px solid #fff;border-top-width:2.5px;border-bottom-width:3px;background:#3a64c8"></div><div class="a" style="left:12px;top:12px;width:3px;height:3px;background:#fff"></div></div>
<div class="a" style="left:844px;top:6px;width:21px;height:21px;border:1px solid #fff;border-radius:3px;background:radial-gradient(circle at 25% 20%,#8cb4ff 0,#4a7ef5 35%,#2a5de8 75%,#1c4fd6 100%);box-shadow:inset -1px -1px rgba(0,0,60,.25)"><div class="a" style="left:4px;top:12px;width:7px;height:3px;background:#fff"></div></div>
<div class="a" style="left:867px;top:6px;width:21px;height:21px;border:1px solid #fff;border-radius:3px;background:radial-gradient(circle at 25% 20%,#8cb4ff 0,#4a7ef5 35%,#2a5de8 75%,#1c4fd6 100%);box-shadow:inset -1px -1px rgba(0,0,60,.25)"><div class="a" style="left:4px;top:4px;width:11px;height:11px;border:1px solid #fff;border-top-width:3px"></div></div>
<div class="a" style="left:890px;top:6px;width:21px;height:21px;border:1px solid #fff;border-radius:3px;background:radial-gradient(circle at 25% 20%,#f29d7e 0,#e5633d 35%,#d8481c 80%,#c8401a 100%);box-shadow:inset -1px -1px rgba(0,0,60,.25)"><svg class="a" style="left:3px;top:3px" width="13" height="13" viewBox="0 0 13 13"><path d="M1.5 1.5 L11.5 11.5 M11.5 1.5 L1.5 11.5" stroke="#fff" stroke-width="2" /></svg></div>
<svg class="a" style="left:6px;top:8px" width="16" height="16" viewBox="0 0 16 16"><path d="M2.6 1.6 L13.6 5 L13.6 14.2 L2.6 14.2Z" fill="#dcdcdc" stroke="#000" stroke-width="1.4"/><path d="M3 3.2 L13 6.3" stroke="#000" stroke-width="1.2"/><path d="M3 0.8 L13.5 4" stroke="#000" stroke-width="1" stroke-dasharray="1 1.3"/><path d="M9 7 V13 M6 8 V13" stroke="#808080" stroke-width="1"/><path d="M13.6 13.5 L15.5 15" stroke="#000" stroke-width="1.2"/><path d="M4 9.5 V15.5 M7 9.5 V15.5 M1.5 11.3 H9 M1.5 13.7 H9" stroke="#101010" stroke-width="2.2"/><path d="M4 9.5 V15.5 M7 9.5 V15.5 M1.5 11.3 H9 M1.5 13.7 H9" stroke="#f0d890" stroke-width="1"/></svg>
<svg class="a" style="left:13px;top:54px" width="15" height="14" viewBox="0 0 15 14"><path d="M1.5 1 H8 L10 2 L13.5 4 L11.5 12 H1.5Z" fill="#f6e090"/><path d="M1.2 0.5 V11.7 H6" fill="none" stroke="#201800" stroke-width="1.1"/><path d="M8 1 L10 2 L13.5 4 L11.5 12" fill="none" stroke="#201800" stroke-width="1" stroke-dasharray="1.2 0.8"/><circle cx="6.5" cy="6.5" r="3" fill="#d4f2fc" stroke="#d8d0a0" stroke-width="0.8"/><path d="M9.3 9.6 L12 12.5" stroke="#302818" stroke-width="1.6"/></svg>
<svg class="a" style="left:84px;top:52px" width="14" height="16" viewBox="0 0 14 16"><path d="M1 0.5 H9 L13 4.5 V15.5 H1Z" fill="#f8faff"/><path d="M9 0.5 L13 4.5" stroke="#404850" stroke-width="0.8" stroke-dasharray="1 0.8"/><rect x="0" y="0" width="1.2" height="16" fill="#404040"/><path d="M7 1 V6" stroke="#304070" stroke-width="1"/><rect x="4" y="6" width="7" height="9" fill="#1a2a40"/><rect x="4.5" y="10" width="6" height="4.5" fill="#4a98d0"/><rect x="8" y="7" width="2" height="2" fill="#a08050"/><rect x="5" y="7" width="2" height="2" fill="#8090b0"/></svg>
<div class="a" style="left:879px;top:110px;width:1px;height:287px;background:#9aa8aa"></div>
<div class="a" style="left:880px;top:110px;width:17px;height:287px;background:#fbfbf8"></div>
<div class="a" style="left:882px;top:111px;width:14px;height:15px;background:linear-gradient(135deg,#dce6fc 0,#c6d6fa 50%,#b4c8f4 100%);border:1px solid #b9cbf3;border-radius:2px;box-shadow:inset 1px 1px #f0f4fe"></div>
<svg class="a" style="left:884px;top:115px" width="9" height="8" viewBox="0 0 9 8"><path d="M1 6 L4.5 2.5 L8 6" fill="none" stroke="#4d6185" stroke-width="2.2"/></svg>
<div class="a" style="left:882px;top:128px;width:14px;height:123px;background:linear-gradient(90deg,#c9d8fc,#bccffa 60%,#b0c6f6);border:1px solid #a9bdeb;border-radius:2px;box-shadow:inset 1px 1px #eef3fe"></div><div class="a" style="left:885px;top:185px;width:8px;height:1px;background:#a4b8e6;box-shadow:0 1px #eef3fe"></div><div class="a" style="left:885px;top:187px;width:8px;height:1px;background:#a4b8e6;box-shadow:0 1px #eef3fe"></div><div class="a" style="left:885px;top:189px;width:8px;height:1px;background:#a4b8e6;box-shadow:0 1px #eef3fe"></div><div class="a" style="left:885px;top:191px;width:8px;height:1px;background:#a4b8e6;box-shadow:0 1px #eef3fe"></div>
<div class="a" style="left:882px;top:381px;width:14px;height:15px;background:linear-gradient(135deg,#dce6fc 0,#c6d6fa 50%,#b4c8f4 100%);border:1px solid #b9cbf3;border-radius:2px;box-shadow:inset 1px 1px #f0f4fe"></div>
<svg class="a" style="left:884px;top:385px" width="9" height="8" viewBox="0 0 9 8"><path d="M1 2 L4.5 5.5 L8 2" fill="none" stroke="#4d6185" stroke-width="2.2"/></svg>
<div class="a" style="left:880px;top:441px;width:20px;height:164px;background:#fbfbf8"></div>
<div class="a" style="left:885px;top:442px;width:14px;height:15px;background:linear-gradient(135deg,#dce6fc 0,#c6d6fa 50%,#b4c8f4 100%);border:1px solid #b9cbf3;border-radius:2px;box-shadow:inset 1px 1px #f0f4fe"></div>
<svg class="a" style="left:887px;top:446px" width="9" height="8" viewBox="0 0 9 8"><path d="M1 6 L4.5 2.5 L8 6" fill="none" stroke="#4d6185" stroke-width="2.2"/></svg>
<div class="a" style="left:885px;top:459px;width:14px;height:36px;background:linear-gradient(90deg,#c9d8fc,#bccffa 60%,#b0c6f6);border:1px solid #a9bdeb;border-radius:2px;box-shadow:inset 1px 1px #eef3fe"></div><div class="a" style="left:888px;top:473px;width:8px;height:1px;background:#a4b8e6;box-shadow:0 1px #eef3fe"></div><div class="a" style="left:888px;top:475px;width:8px;height:1px;background:#a4b8e6;box-shadow:0 1px #eef3fe"></div><div class="a" style="left:888px;top:477px;width:8px;height:1px;background:#a4b8e6;box-shadow:0 1px #eef3fe"></div><div class="a" style="left:888px;top:479px;width:8px;height:1px;background:#a4b8e6;box-shadow:0 1px #eef3fe"></div>
<div class="a" style="left:885px;top:588px;width:14px;height:15px;background:linear-gradient(135deg,#dce6fc 0,#c6d6fa 50%,#b4c8f4 100%);border:1px solid #b9cbf3;border-radius:2px;box-shadow:inset 1px 1px #f0f4fe"></div>
<svg class="a" style="left:887px;top:592px" width="9" height="8" viewBox="0 0 9 8"><path d="M1 2 L4.5 5.5 L8 2" fill="none" stroke="#4d6185" stroke-width="2.2"/></svg>
<svg class="a" style="left:49px;top:178px" width="9" height="9" viewBox="0 0 9 9"><path d="M1 4 L3.5 6.5 L8 1.5" fill="none" stroke="#000" stroke-width="2.2"/></svg>
</body></html>
